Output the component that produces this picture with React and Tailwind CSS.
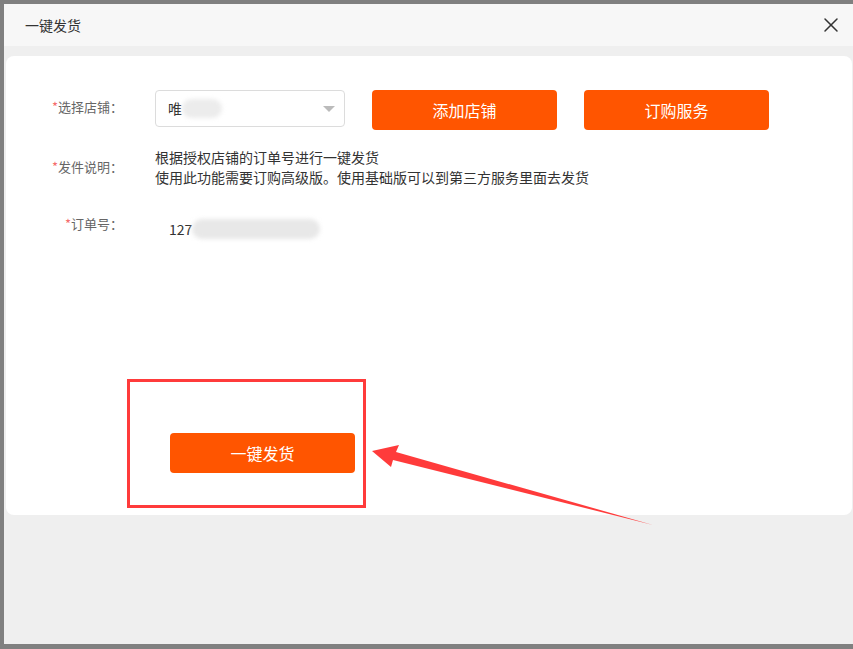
import { X } from "lucide-react";

const font = { fontFamily: '"Noto Sans CJK SC", "Noto Sans", sans-serif' };

function Label({ text, className = "" }) {
  return (
    <div className={"w-[117px] shrink-0 text-right text-[13px] leading-5 text-[#666] " + className}>
      <span className="text-[#f56c6c]">*</span>
      {text}：
    </div>
  );
}

function OrangeButton({ children, className = "" }) {
  return (
    <button
      className={
        "flex h-10 w-[185px] items-center justify-center rounded bg-[#ff5500] text-[16px] text-white " +
        className
      }
    >
      {children}
    </button>
  );
}

export default function App() {
  return (
    <div
      className="relative h-[649px] w-[853px] overflow-hidden bg-[#808080] pb-[5px] pl-1 pt-1"
      style={font}
    >
      <div className="flex h-full flex-col bg-[#efefef]">
        {/* dialog header */}
        <div className="flex h-[42px] shrink-0 items-center justify-between bg-[#f7f7f7] pl-[21px] pr-[10px]">
          <span className="text-[14px] text-[#333]">一键发货</span>
          <X size={24} strokeWidth={1.5} className="text-[#333]" />
        </div>

        <div className="pl-[2px] pr-[1px] pt-[10px]">
          <div className="h-[459px] rounded-lg bg-white pt-[34px]">
            {/* store row */}
            <div className="flex items-start">
              <Label text="选择店铺" className="mt-[7px]" />
              <div className="ml-[32px] flex h-[37px] w-[190px] items-center justify-between rounded border border-[#dcdcdc] pl-3 pr-[9px]">
                <div className="flex items-center">
                  <span className="text-[14px] text-[#333]">唯</span>
                  <div className="h-[19px] w-[40px] rounded-full bg-[#ececec] blur-[2px]" />
                </div>
                <div className="h-0 w-0 border-x-[6px] border-t-[6px] border-x-transparent border-t-[#bbb]" />
              </div>
              <OrangeButton className="ml-[27px]">添加店铺</OrangeButton>
              <OrangeButton className="ml-[27px]">订购服务</OrangeButton>
            </div>

            {/* description row */}
            <div className="mt-[17px] flex items-center">
              <Label text="发件说明" />
              <div className="ml-[32px] text-[14px] leading-5 text-[#333]">
                <p>根据授权店铺的订单号进行一键发货</p>
                <p>使用此功能需要订购高级版。使用基础版可以到第三方服务里面去发货</p>
              </div>
            </div>

            {/* order number row */}
            <div className="mt-[27px] flex items-start">
              <Label text="订单号" />
              <div className="ml-[32px] mt-[5px] flex items-center pl-[14px]">
                <span className="text-[14px] leading-5 text-[#333]">127</span>
                <div className="h-[20px] w-[128px] rounded-full bg-[#e8e8e8] blur-[2px]" />
              </div>
            </div>

            <OrangeButton className="ml-[164px] mt-[194px]">一键发货</OrangeButton>
          </div>
        </div>
      </div>

      {/* annotation: red box */}
      <div className="absolute left-[127px] top-[379px] h-[129px] w-[239px] border-[3px] border-[#ff3b3b]" />

      {/* annotation: arrow */}
      <svg className="absolute left-0 top-0" width="853" height="649" viewBox="0 0 853 649">
        <polygon
          points="372,451 399,445 396,452 653,525 393,460 391,467"
          fill="#ff3b3b"
        />
      </svg>
    </div>
  );
}
